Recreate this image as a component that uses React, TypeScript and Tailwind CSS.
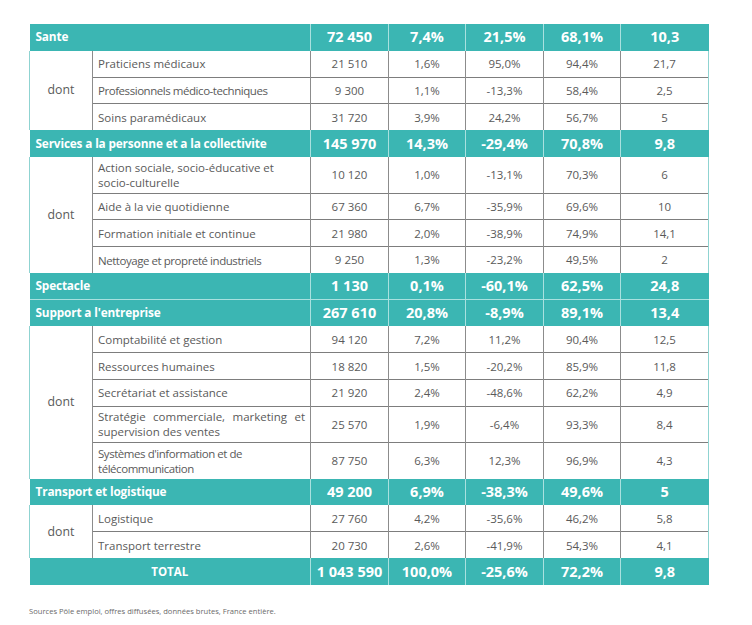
import React from "react";

type Sub = { label: string; tight?: boolean; justify?: boolean; two?: boolean; v: string[] };
type Group = { title: string; v: string[]; subs: Sub[] };

const groups: Group[] = [
  {
    title: "Sante",
    v: ["72 450", "7,4%", "21,5%", "68,1%", "10,3"],
    subs: [
      { label: "Praticiens médicaux", v: ["21 510", "1,6%", "95,0%", "94,4%", "21,7"] },
      { label: "Professionnels médico-techniques", tight: true, v: ["9 300", "1,1%", "-13,3%", "58,4%", "2,5"] },
      { label: "Soins paramédicaux", v: ["31 720", "3,9%", "24,2%", "56,7%", "5"] },
    ],
  },
  {
    title: "Services a la personne et a la collectivite",
    v: ["145 970", "14,3%", "-29,4%", "70,8%", "9,8"],
    subs: [
      { label: "Action sociale, socio-éducative et socio-culturelle", two: true, v: ["10 120", "1,0%", "-13,1%", "70,3%", "6"] },
      { label: "Aide à la vie quotidienne", v: ["67 360", "6,7%", "-35,9%", "69,6%", "10"] },
      { label: "Formation initiale et continue", v: ["21 980", "2,0%", "-38,9%", "74,9%", "14,1"] },
      { label: "Nettoyage et propreté industriels", tight: true, v: ["9 250", "1,3%", "-23,2%", "49,5%", "2"] },
    ],
  },
  {
    title: "Spectacle",
    v: ["1 130", "0,1%", "-60,1%", "62,5%", "24,8"],
    subs: [],
  },
  {
    title: "Support a l'entreprise",
    v: ["267 610", "20,8%", "-8,9%", "89,1%", "13,4"],
    subs: [
      { label: "Comptabilité et gestion", v: ["94 120", "7,2%", "11,2%", "90,4%", "12,5"] },
      { label: "Ressources humaines", v: ["18 820", "1,5%", "-20,2%", "85,9%", "11,8"] },
      { label: "Secrétariat et assistance", v: ["21 920", "2,4%", "-48,6%", "62,2%", "4,9"] },
      { label: "Stratégie commerciale, marketing et supervision des ventes", two: true, justify: true, v: ["25 570", "1,9%", "-6,4%", "93,3%", "8,4"] },
      { label: "Systèmes d'information et de télécommunication", two: true, tight: true, v: ["87 750", "6,3%", "12,3%", "96,9%", "4,3"] },
    ],
  },
  {
    title: "Transport et logistique",
    v: ["49 200", "6,9%", "-38,3%", "49,6%", "5"],
    subs: [
      { label: "Logistique", v: ["27 760", "4,2%", "-35,6%", "46,2%", "5,8"] },
      { label: "Transport terrestre", v: ["20 730", "2,6%", "-41,9%", "54,3%", "4,1"] },
    ],
  },
];

const HeadRow = ({ title, v, center, afterTeal }: { title: string; v: string[]; center?: boolean; afterTeal?: boolean }) => (
  <tr className={"h-[26.6px] bg-[#3bb6b3] text-white " + (afterTeal ? "border-t border-[#a9e1df]" : "")}>
    <td
      colSpan={2}
      className={
        center
          ? "text-center text-[11.5px] font-bold uppercase"
          : "pl-[6px] text-[11.8px] font-bold tracking-[-0.15px]"
      }
    >
      {title}
    </td>
    {v.map((x, i) => (
      <td key={i} className="border-l border-[#a9e1df] text-center text-[14.5px] font-bold">
        {x}
      </td>
    ))}
  </tr>
);

export default function App() {
  return (
    <div className="min-h-screen bg-white font-['Open_Sans',sans-serif]">
      <div className="px-[29px] pt-[24px]">
        <table className="w-[679px] table-fixed border-collapse">
          <colgroup>
            <col className="w-[63px]" />
            <col className="w-[218px]" />
            <col className="w-[78px]" />
            <col className="w-[77px]" />
            <col className="w-[78px]" />
            <col className="w-[77px]" />
            <col className="w-[88px]" />
          </colgroup>
          <tbody>
            {groups.map((g, gi) => (
              <React.Fragment key={g.title}>
                <HeadRow title={g.title} v={g.v} afterTeal={gi > 0 && groups[gi - 1].subs.length === 0} />
                {g.subs.map((s, i) => (
                  <tr
                    key={s.label}
                    className={(s.two ? "h-[36.3px] " : "h-[26.6px] ") + "text-[#5a5a5a]"}
                  >
                    {i === 0 && (
                      <td
                        rowSpan={g.subs.length}
                        className="border-l border-r border-l-[#8fd3d1] border-r-[#8c8c8c] text-center text-[12.3px]"
                      >
                        dont
                      </td>
                    )}
                    <td
                      className={
                        (i > 0 ? "border-t border-[#7d7d7d] " : "") +
                        "px-[5px] text-[11.5px] leading-[15px] " +
                        (s.tight ? "tracking-[-0.45px] " : "") +
                        (s.justify ? "text-justify " : "")
                      }
                    >
                      {s.label}
                    </td>
                    {s.v.map((x, j) => (
                      <td
                        key={j}
                        className={
                          (i > 0 ? "border-t border-t-[#7d7d7d] " : "") +
                          "border-l border-l-[#8c8c8c] text-center text-[11.5px] " +
                          (j === 4 ? "border-r border-r-[#8fd3d1]" : "")
                        }
                      >
                        {x}
                      </td>
                    ))}
                  </tr>
                ))}
              </React.Fragment>
            ))}
            <HeadRow title="TOTAL" v={["1 043 590", "100,0%", "-25,6%", "72,2%", "9,8"]} center />
          </tbody>
        </table>
        <p className="mt-[21px] text-[7.6px] text-[#6a6a6a]">
          Sources Pôle emploi, offres diffusées, données brutes, France entière.
        </p>
      </div>
    </div>
  );
}
